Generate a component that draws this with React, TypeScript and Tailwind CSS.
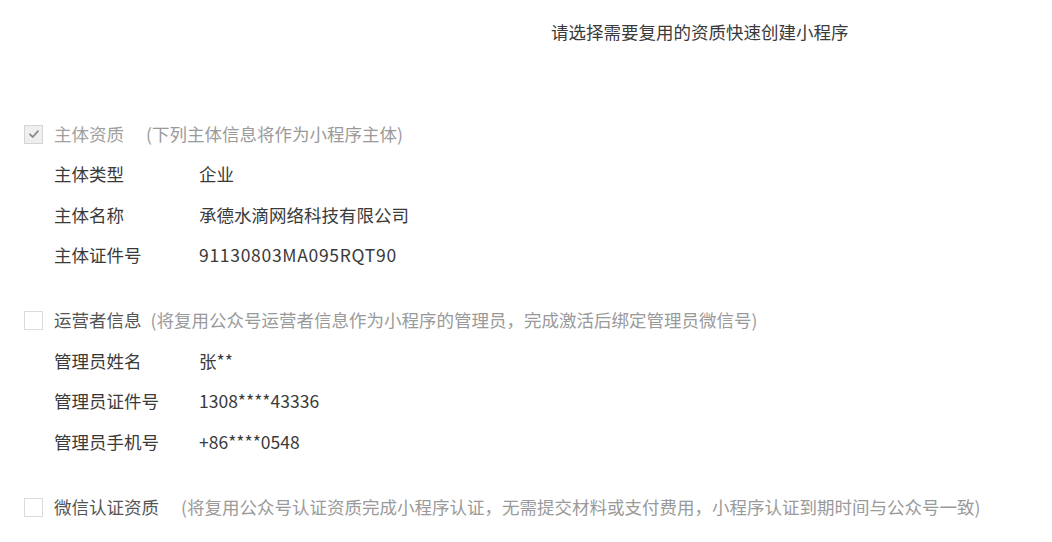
const font = { fontFamily: '"Noto Sans CJK SC", "Noto Sans", sans-serif' };

type Row = { label: string; value: string; wide?: boolean };

function Checkbox({ checked }: { checked?: boolean }) {
  return (
    <span
      className={`flex h-[19px] w-[19px] shrink-0 items-center justify-center border ${
        checked ? "border-[#d4d4d4] bg-[#efefef]" : "border-[#dcdcdc] bg-white"
      }`}
    >
      {checked && (
        <svg width="12" height="12" viewBox="0 0 12 12" fill="none">
          <path d="M2 6.3 L4.8 9 L10 3.2" stroke="#8a8a8a" strokeWidth="1.8" strokeLinecap="round" strokeLinejoin="round" />
        </svg>
      )}
    </span>
  );
}

function Section({
  title,
  note,
  noteGap,
  checked,
  rows,
}: {
  title: string;
  note: string;
  noteGap: string;
  checked?: boolean;
  rows: Row[];
}) {
  return (
    <div className="flex flex-col">
      <div className="flex h-[40px] items-center">
        <Checkbox checked={checked} />
        <span className={`ml-[11px] ${checked ? "text-[#a0a0a0]" : "text-[#555]"}`}>{title}</span>
        <span className={`${noteGap} text-[#9a9a9a]`}>{note}</span>
      </div>
      {rows.map((r) => (
        <div key={r.label} className="flex h-[40.5px] items-center pl-[30px] text-[#3a3a3a]">
          <span className="w-[145px]">{r.label}</span>
          <span className={r.wide ? "tracking-[0.7px]" : ""}>{r.value}</span>
        </div>
      ))}
    </div>
  );
}

export default function App() {
  return (
    <div className="min-h-screen bg-white text-[17.5px]" style={font}>
      <div className="flex h-[64px] items-center pl-[551px] text-[#3a3a3a]">
        请选择需要复用的资质快速创建小程序
      </div>
      <div className="mt-[50px] flex flex-col gap-[25px] pl-[24px]">
        <Section
          checked
          title="主体资质"
          note="(下列主体信息将作为小程序主体)"
          noteGap="ml-[22px]"
          rows={[
            { label: "主体类型", value: "企业" },
            { label: "主体名称", value: "承德水滴网络科技有限公司" },
            { label: "主体证件号", value: "91130803MA095RQT90", wide: true },
          ]}
        />
        <Section
          title="运营者信息"
          note="(将复用公众号运营者信息作为小程序的管理员，完成激活后绑定管理员微信号)"
          noteGap="ml-[9px]"
          rows={[
            { label: "管理员姓名", value: "张**" },
            { label: "管理员证件号", value: "1308****43336" },
            { label: "管理员手机号", value: "+86****0548" },
          ]}
        />
        <Section
          title="微信认证资质"
          note="(将复用公众号认证资质完成小程序认证，无需提交材料或支付费用，小程序认证到期时间与公众号一致)"
          noteGap="ml-[22px]"
          rows={[]}
        />
      </div>
    </div>
  );
}
